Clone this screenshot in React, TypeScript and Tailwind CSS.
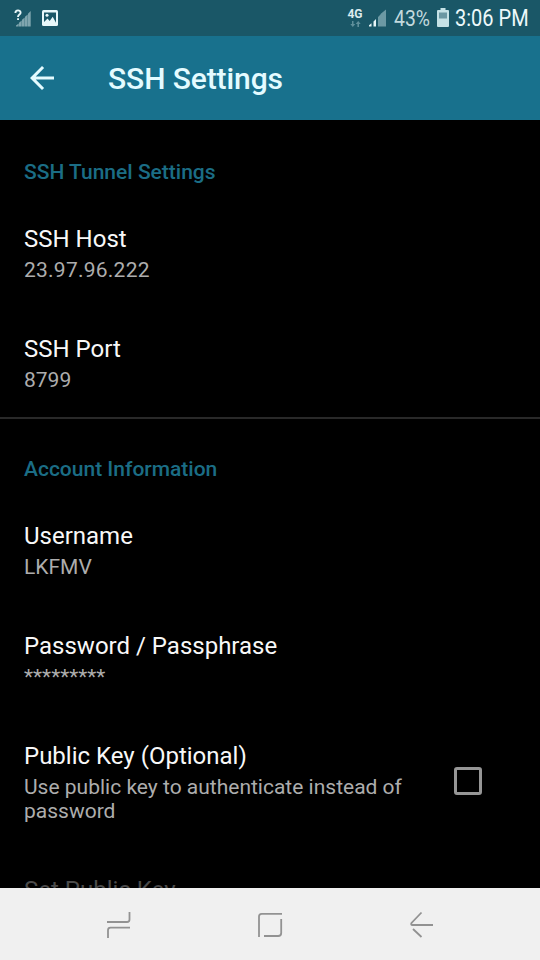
import { clsx } from 'clsx'

type Preference = {
  title: string
  summary?: string
  summaryClass?: string
  checkbox?: boolean
  disabled?: boolean
}

const tunnel: Preference[] = [
  { title: 'SSH Host', summary: '23.97.96.222', summaryClass: 'tracking-[0.24px]' },
  { title: 'SSH Port', summary: '8799' },
]

const account: Preference[] = [
  { title: 'Username', summary: 'LKFMV' },
  { title: 'Password / Passphrase', summary: '*********' },
  { title: 'Public Key (Optional)', summary: 'Use public key to authenticate instead of password', checkbox: true },
  { title: 'Set Public Key', disabled: true },
]

function StatusBar() {
  return (
    <div className="flex h-9 shrink-0 items-center justify-between bg-[#1a5767] pr-3 pl-[14px]">
      <div className="flex items-center gap-[11px]">
        <svg width="17" height="18" viewBox="0 0 17 18">
          <path
            d="M2 17.5h2.700v-3L2 16.5zM5 17.5h2.700v-6L5 13.7zM8 17.5h2.700V8.6L8 10.8zM11 17.5h2.700v-12L11 7.8zM14 17.5h2.700V2L14 4.700z"
            fill="#7fa5ae"
          />
          <path d="M1.400 4C1.400 .6 6.600 .6 6.600 3.800C6.600 5.700 4 5.500 4 8" fill="none" stroke="#e8f6f8" strokeWidth="1.900" />
          <path d="M3.100 9.200h1.900V11H3.100z" fill="#e8f6f8" />
        </svg>
        <svg width="16" height="16" viewBox="0 0 16 16">
          <rect width="16" height="16" rx="1.500" fill="#e8f8fa" />
          <path d="M2 2.500h12v10.200l-3.300-5.900-3 4.200-2.200-2.500L2 12z" fill="#1a5767" />
          <circle cx="5" cy="5.300" r="1.500" fill="#e8f8fa" />
        </svg>
      </div>
      <div className="flex items-center">
        <div className="flex w-4 flex-col items-center">
          <span className="text-[12px] leading-[11px] font-bold text-[#dcebee]">4G</span>
          <svg width="11" height="6" viewBox="0 0 11 6" className="mt-px">
            <path d="M2 0h1.500v3H5.300L2.800 6 .3 3H2zM8.200 0l2.500 3H9v3H7.400V3H5.700z" fill="#5f8f9b" />
          </svg>
        </div>
        <svg width="19" height="18" viewBox="0 0 19 18" className="ml-[5px]">
          <path d="M1 17.500v-1.200l2.500-2v3.200zM5.500 17.500v-5L8 10v7.500z" fill="#e8f6f8" />
          <path d="M10 17.500V8l2.500-2.500v12zM12.500 17.500V5l5.500-4.500v17z" fill="#6c99a4" />
        </svg>
        <span className="ml-[7px] w-[37px] text-[22px] leading-6 whitespace-nowrap text-[#c3dade]">
          <span className="inline-block origin-left translate-y-px scale-x-[.88]">43%</span>
        </span>
        <svg width="12" height="19" viewBox="0 0 12 19" className="mb-0.5 ml-[6px]">
          <path d="M3.500 0h5v2H11q1 0 1 1v15q0 1-1 1H1q-1 0-1-1V3q0-1 1-1h2.500z" fill="#c5e2e6" />
          <path d="M2 4.500h8v6H2z" fill="#6b98a3" />
        </svg>
        <span className="ml-[6px] w-[73px] text-[23px] leading-6 whitespace-nowrap text-[#edf9fa]">
          <span className="inline-block origin-left translate-y-px scale-x-[.87]">3:06 PM</span>
        </span>
      </div>
    </div>
  )
}

function AppBar() {
  return (
    <header className="flex h-[84px] shrink-0 items-center bg-[#18718d] pl-6">
      <button type="button" aria-label="Back" className="w-[84px]">
        <svg width="36" height="36" viewBox="0 0 24 24" fill="#e4fbff">
          <path d="M20 11H7.830l5.590-5.590L12 4l-8 8 8 8 1.410-1.410L7.830 13H20v-2z" />
        </svg>
      </button>
      <h1 className="pt-px text-[30px] leading-9 font-medium tracking-[-0.1px] text-[#e4fbff]">SSH Settings</h1>
    </header>
  )
}

function PreferenceRow({ title, summary, summaryClass, checkbox, disabled }: Preference) {
  return (
    <div className="flex items-center pt-[27px] pb-[25px]">
      <div className="w-[406px] shrink-0 pl-6">
        <div className={clsx('text-[24px] leading-[30px] whitespace-nowrap', disabled ? 'text-[#4b4b4b]' : 'text-[#f8f8f8]')}>
          {title}
        </div>
        {summary && <div className={clsx('mt-1 text-[21px] leading-6 text-[#adadad]', summaryClass)}>{summary}</div>}
      </div>
      {checkbox && (
        <div role="checkbox" aria-checked={false} className="mb-0.5 ml-12 size-7 rounded-[3px] border-3 border-[#969696]" />
      )}
    </div>
  )
}

function Category({ label, items }: { label: string; items: Preference[] }) {
  return (
    <section>
      <h2 className="px-6 pt-10 pb-[13px] text-[21px] leading-6 font-medium text-[#1b6d85]">{label}</h2>
      {items.map((item) => (
        <PreferenceRow key={item.title} {...item} />
      ))}
    </section>
  )
}

function NavBar() {
  return (
    <nav className="grid h-[72px] shrink-0 grid-cols-[86px_152px_152px_150px] bg-[#f0f0f0]">
      <span />
      <svg width="64" height="72" viewBox="86 888 64 72" fill="none" stroke="#929292" strokeWidth="1.800">
        <path d="M107 922h20q2.500 0 2.500-2.500V912M130 927.700h-19.500q-2.500 0-2.500 2.500V938" />
      </svg>
      <svg width="64" height="72" viewBox="238 888 64 72" fill="none" stroke="#929292" strokeWidth="1.800">
        <path d="M259 937v-20.500q0-2.700 2.700-2.700H282M281.200 919v14q0 3-3 3H264" />
      </svg>
      <svg width="64" height="72" viewBox="390 888 64 72" fill="none" stroke="#929292" strokeWidth="1.800">
        <path d="M421.500 912.500L411.500 923q-1 2 1 2H433M413 929l8.500 8" />
      </svg>
    </nav>
  )
}

export default function App() {
  return (
    <div className="flex h-[960px] w-[540px] flex-col overflow-hidden bg-black font-[Roboto,sans-serif]">
      <StatusBar />
      <AppBar />
      <main className="min-h-0 flex-1 overflow-hidden">
        <Category label="SSH Tunnel Settings" items={tunnel} />
        <div className="-mb-0.5 h-0.5 bg-[#292929]" />
        <Category label="Account Information" items={account} />
      </main>
      <NavBar />
    </div>
  )
}
